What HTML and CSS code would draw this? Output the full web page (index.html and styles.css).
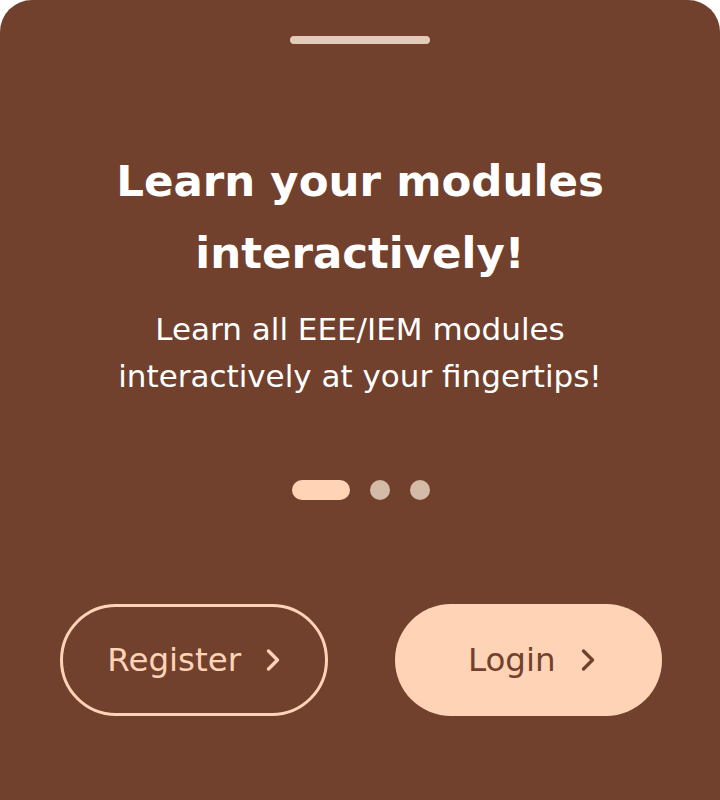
FILE: index.html
```html
<!DOCTYPE html>
<html lang="en">
<head>
<meta charset="utf-8">
<title>Welcome</title>
<link rel="stylesheet" href="styles.css">
</head>
<body>
<main class="sheet">
  <div class="handle"></div>
  <h1 class="title">Learn your modules<br>interactively!</h1>
  <p class="subtitle">Learn all EEE/IEM modules<br>interactively at your fingertips!</p>
  <div class="dots">
    <span class="dot dot-active"></span>
    <span class="dot"></span>
    <span class="dot"></span>
  </div>
  <div class="actions">
    <button class="btn btn-outline">
      <span>Register</span>
      <svg class="chev" width="14" height="24" viewBox="0 0 14 24"><path d="M2.5 3 L11.5 12 L2.5 21" fill="none" stroke="currentColor" stroke-width="3.4" stroke-linecap="round" stroke-linejoin="round"/></svg>
    </button>
    <button class="btn btn-solid">
      <span>Login</span>
      <svg class="chev" width="14" height="24" viewBox="0 0 14 24"><path d="M2.5 3 L11.5 12 L2.5 21" fill="none" stroke="currentColor" stroke-width="3.4" stroke-linecap="round" stroke-linejoin="round"/></svg>
    </button>
  </div>
</main>
</body>
</html>
```
FILE: styles.css
```css
html, body {
  margin: 0;
  padding: 0;
  background: #ffffff;
}

body {
  font-family: "DejaVu Sans", "Noto Sans", sans-serif;
}

.sheet {
  box-sizing: border-box;
  width: 720px;
  height: 800px;
  background: #71412d;
  border-radius: 32px 32px 0 0;
  display: flex;
  flex-direction: column;
  align-items: center;
  padding-top: 36px;
}

.handle {
  width: 140px;
  height: 8px;
  border-radius: 4px;
  background: #e2cbbb;
}

.title {
  margin: 101px 0 0;
  color: #ffffff;
  font-size: 43.5px;
  font-weight: 700;
  line-height: 72px;
  text-align: center;
}

.subtitle {
  margin: 17px 0 0;
  color: #ffffff;
  font-size: 31px;
  font-weight: 400;
  line-height: 47px;
  text-align: center;
}

.dots {
  margin-top: 80px;
  display: flex;
  gap: 20px;
  padding-left: 2px;
}

.dot {
  width: 20px;
  height: 20px;
  border-radius: 10px;
  background: #d4bba8;
}

.dot-active {
  width: 58px;
  background: #ffd4b6;
}

.actions {
  margin-top: 104px;
  align-self: stretch;
  display: flex;
  gap: 67px;
  padding: 0 58px 0 60px;
}

.btn {
  box-sizing: border-box;
  flex: 1;
  height: 112px;
  border-radius: 56px;
  display: flex;
  align-items: center;
  justify-content: center;
  gap: 25px;
  font-family: inherit;
  font-size: 32.5px;
  font-weight: 400;
  cursor: pointer;
}

.btn-outline {
  background: transparent;
  border: 3px solid #ffd4b6;
  color: #ffd4b6;
}

.btn-solid {
  background: #ffd4b6;
  border: none;
  color: #71412d;
  padding-left: 12px;
}

.chev {
  display: block;
  flex: none;
}
```
